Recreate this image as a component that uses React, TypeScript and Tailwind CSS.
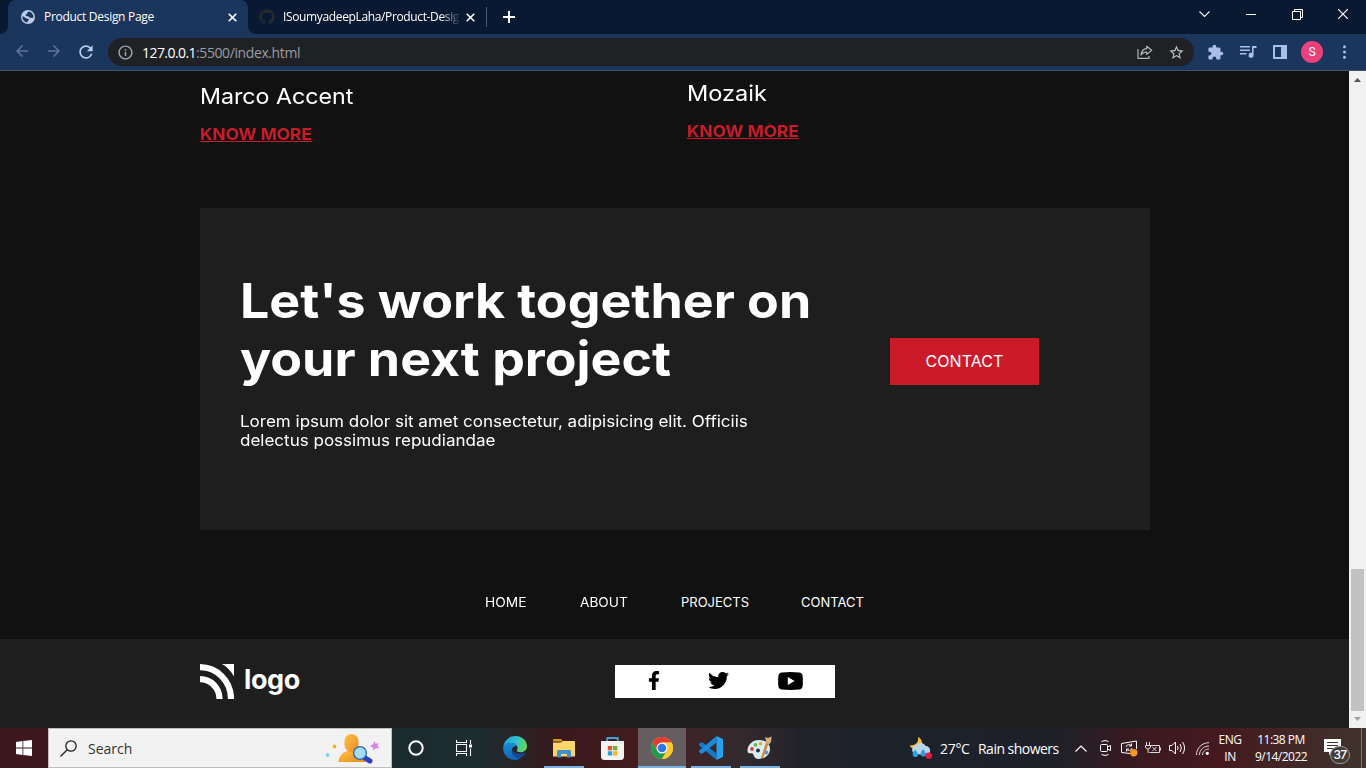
import type { ReactNode } from "react";
import { FaFacebookF, FaTwitter, FaGithub } from "react-icons/fa";
import {
  MdArrowBack,
  MdArrowForward,
  MdRefresh,
  MdInfoOutline,
  MdExtension,
  MdStarBorder,
} from "react-icons/md";

function TabClose() {
  return (
    <svg className="size-[9px] shrink-0" viewBox="0 0 9 9" stroke="#fff" strokeWidth="1.6">
      <path d="M.7.7l7.6 7.6M8.3.7L.7 8.3" />
    </svg>
  );
}

function TabStrip() {
  return (
    <div className="flex h-[34px] bg-[#091931]">
      <div className="flex w-2 items-end bg-[#1b365d]">
        <div className="h-full w-2 rounded-br-lg bg-[#091931]" />
      </div>
      <div className="flex w-[240px] items-center rounded-t-lg bg-[#1b365d] pl-[13px] pr-[11px]">
        <svg className="size-[14px] shrink-0" viewBox="0 0 14 14">
          <circle cx="7" cy="7" r="7" fill="#bccbe6" />
          <path
            d="M7.800 1.400C6.800 2 6 2.300 6.200 3.300 6.300 4.200 5 4 4.600 5c-.3 1 1 1.300 2.200 1.300 1.700 0 1.400 1.700 2.700 1.700.9 0 1.700-.2 2.900-.2A5.700 5.700 0 0 0 7.800 1.400zM1.500 6.200C1.200 9.500 3.200 12 6.500 12.500c-.2-1.500.8-1.600 1.300-2.500.4-1-.8-1.200-1.600-1.300C4.300 8.300 3.500 6.400 1.500 6.200z"
            fill="#1b365d"
          />
        </svg>
        <span className="ml-[9px] flex-1 whitespace-nowrap text-[12px] tracking-[-0.29px] text-white">
          Product Design Page
        </span>
        <TabClose />
      </div>
      <div className="w-2 bg-[#1b365d]">
        <div className="h-full w-2 rounded-bl-lg bg-[#091931]" />
      </div>
      <div className="flex w-[231px] items-center pl-[3px]">
        <FaGithub className="size-4 shrink-0 text-[#24292f]" />
        <span className="ml-2 w-[177px] whitespace-nowrap text-[12px] tracking-[-0.36px] text-white [mask-image:linear-gradient(90deg,#000_158px,transparent_178px)]">
          ISoumyadeepLaha/Product-Desig
        </span>
        <span className="ml-[6px] flex">
          <TabClose />
        </span>
        <span className="ml-[11px] h-5 w-px bg-[#4a5a74]" />
      </div>
      <svg className="ml-4 mt-[11px] size-3" viewBox="0 0 12 12" stroke="#fff" strokeWidth="2">
        <path d="M6 0v12M0 6h12" />
      </svg>
      <div className="ml-auto flex items-start gap-[35px] pr-[18px] pt-[9px]">
        <svg className="mr-[1px] size-[11px]" viewBox="0 0 11 11" fill="none" stroke="#f0f3f8" strokeWidth="1.100">
          <path d="M.5 2.500l5 5 5-5" />
        </svg>
        <svg className="size-[11px]" viewBox="0 0 11 11" stroke="#fff">
          <path d="M0 5.500h10" />
        </svg>
        <svg className="size-[11px]" viewBox="0 0 11 11" fill="none" stroke="#fff">
          <path d="M.5 2.500h8v8h-8zM2.500 2.500v-2h8v8h-2" />
        </svg>
        <svg className="size-[10px]" viewBox="0 0 10 10" stroke="#fff" strokeWidth="1.200">
          <path d="M0 0l10 10M10 0L0 10" />
        </svg>
      </div>
    </div>
  );
}

function Toolbar() {
  return (
    <div className="flex h-[37px] items-center border-b border-[#42546e] bg-[#1b365d]">
      <div className="flex w-[108px] gap-[14px] pl-[13px] text-[#5d7499]">
        <MdArrowBack className="size-[18px]" />
        <MdArrowForward className="size-[18px]" />
        <MdRefresh className="-ml-px size-[20px] text-[#b9cbed]" />
      </div>
      <div className="flex h-7 w-[1086px] items-center rounded-full bg-[#202124] pl-[9px] pr-[9px]">
        <MdInfoOutline className="size-[17px] text-[#a4a8ad]" />
        <span className="ml-2 text-[14px] tracking-[-0.56px] text-white">127.0.0.1</span>
        <span className="text-[14px] tracking-[-0.4px] text-[#999da2]">:5500/index.html</span>
        <svg className="ml-auto size-4" viewBox="0 0 16 16" fill="none" stroke="#b4b7bb" strokeWidth="1.200">
          <path d="M1 5v9.400h11V12" />
          <path d="M9.700 2.200l5 4.100-5 4.100V8C7 8 5.200 9 4 11c.3-3.500 2.300-6 5.700-6.300z" strokeLinejoin="round" />
        </svg>
        <MdStarBorder className="ml-[15px] size-[17px] text-[#bec1c5]" />
      </div>
      <MdExtension className="ml-[13px] size-[17px] text-[#a9bfe6]" />
      <svg className="ml-4 h-4 w-[17px]" viewBox="0 0 17 16" fill="#a9bfe6">
        <path d="M0 2h10v1.600H0zM0 5.500h10v1.600H0zM0 9h6.500v1.600H0zM12 2h4.500v2H13.600v7.200a2.500 2.500 0 1 1-1.600-2.300z" />
      </svg>
      <svg className="ml-4 size-[14px]" viewBox="0 0 14 14">
        <path d="M0 0h14v14H0zM2 2v10h6V2z" fill="#a9bfe6" fillRule="evenodd" />
      </svg>
      <span className="ml-[14px] flex size-[22px] items-center justify-center rounded-full bg-[#ec407a] font-[Roboto] text-[12px] text-white">
        S
      </span>
      <svg className="ml-5 h-[14px] w-[3px]" viewBox="0 0 3 14" fill="#a9bfe6">
        <circle cx="1.500" cy="1.800" r="1.500" />
        <circle cx="1.500" cy="7" r="1.500" />
        <circle cx="1.500" cy="12.200" r="1.500" />
      </svg>
    </div>
  );
}

function KnowMore() {
  return (
    <a className="mt-4 block w-fit origin-left scale-x-[1.082] text-[16px] font-bold leading-5 text-[#cb1b29] underline">
      KNOW MORE
    </a>
  );
}

function ProductLinks() {
  return (
    <div className="flex pl-[200px]">
      <div className="w-[487px] pt-[13px]">
        <h3 className="w-fit origin-left scale-x-[1.055] text-[22px] leading-6">Marco Accent</h3>
        <KnowMore />
      </div>
      <div className="pt-[10px]">
        <h3 className="w-fit origin-left scale-x-[1.07] text-[22px] leading-6">Mozaik</h3>
        <KnowMore />
      </div>
    </div>
  );
}

function CallToAction() {
  return (
    <section className="ml-[200px] flex h-[322px] w-[950px] bg-[#1e1e1e] pl-10 pt-16">
      <div className="w-[650px] whitespace-nowrap">
        <h1 className="w-fit origin-left scale-x-[1.081] text-[48px] font-bold leading-[58px]">
          Let's work together on
          <br />
          your next project
        </h1>
        <p className="mt-6 w-fit origin-left scale-x-[1.063] text-[16px] leading-[19px]">
          Lorem ipsum dolor sit amet consectetur, adipisicing elit. Officiis
          <br />
          delectus possimus repudiandae
        </p>
      </div>
      <button className="mt-[66px] h-[47px] w-[149px] bg-[#cb1b29] pb-[2px] text-[16px] tracking-[0.08px]">
        CONTACT
      </button>
    </section>
  );
}

function Footer() {
  return (
    <footer className="flex h-[89px] bg-[#1e1e1e] pl-[200px]">
      <div className="flex w-[415px] pt-[25px]">
        <svg className="h-[35px] w-[34px]" viewBox="0 0 34 35" fill="none">
          <path d="M0 3.200C17 3.200 31 17 31 35" stroke="#fff" strokeWidth="6.200" />
          <path d="M0 15.200C11 15.200 19.500 24 19.500 35" stroke="#fff" strokeWidth="6.200" />
          <path d="M22 0h12v12.500C31 7.200 27.500 3.300 22 0z" fill="#fff" />
        </svg>
        <span className="ml-[10px] text-[27px] font-bold leading-[31px] tracking-[-0.4px]">logo</span>
      </div>
      <div className="mt-[26px] flex h-[33px] w-[220px] items-center bg-white pb-[2px] pl-[29px] text-black">
        <FaFacebookF className="h-[19px] w-5" />
        <FaTwitter className="ml-[44px] size-[21px]" />
        <svg className="ml-[49px] h-[18px] w-[25px]" viewBox="0 0 25 18">
          <path
            fillRule="evenodd"
            d="M4 .5Q12.500-.4 21 .5 24.300.7 24.600 4q.6 5 0 10-.3 3.300-3.600 3.500-8.500.9-17 0Q.7 17.300.4 14q-.6-5 0-10Q.7.7 4 .5zM9.800 5v8l6.800-4z"
          />
        </svg>
      </div>
    </footer>
  );
}

function Page() {
  return (
    <main className="flex w-[1349px] flex-col bg-[#111] font-[Inter,sans-serif] text-white">
      <div className="h-[137px]">
        <ProductLinks />
      </div>
      <CallToAction />
      <nav className="flex h-[109px] pl-[485px] pt-[62px] text-[13px] leading-5">
        <div className="w-[95px]">
          <a className="inline-block origin-left scale-x-[1.06]">HOME</a>
        </div>
        <div className="w-[101px]">
          <a className="inline-block origin-left scale-x-[1.05]">ABOUT</a>
        </div>
        <a className="w-[120px]">PROJECTS</a>
        <a>CONTACT</a>
      </nav>
      <Footer />
    </main>
  );
}

function Scrollbar() {
  return (
    <div className="flex w-[17px] flex-col items-center bg-[#f1f1f1]">
      <svg className="mt-[7px] h-1 w-[7px]" viewBox="0 0 7 4" fill="#505050">
        <path d="M0 4l3.500-4L7 4z" />
      </svg>
      <div className="mt-[487px] h-[142px] w-[13px] bg-[#c1c1c1]" />
      <svg className="mt-[6px] h-1 w-[7px]" viewBox="0 0 7 4" fill="#a3a3a3">
        <path d="M0 0l3.500 4L7 0z" />
      </svg>
    </div>
  );
}

function SearchArt() {
  return (
    <svg className="ml-auto mt-px h-[34px] w-[56px]" viewBox="0 0 56 34">
      <defs>
        <linearGradient id="person" x1="0" y1="0" x2="1" y2="1">
          <stop offset="0" stopColor="#fbc04a" />
          <stop offset="1" stopColor="#ee8b1c" />
        </linearGradient>
      </defs>
      <circle cx="3.500" cy="23" r="1.900" fill="#7fd6de" />
      <circle cx="10.500" cy="14.500" r="1.900" fill="#f4b223" />
      <path d="M14.500 30c.5-7 5-10 9-11h8c5 1 9 5 9.500 11z" fill="url(#person)" />
      <rect x="20.500" y="2" width="14" height="18" rx="7" fill="url(#person)" />
      <path d="M41 26l5 3" stroke="#303fc0" strokeWidth="5" strokeLinecap="round" />
      <circle cx="36" cy="21" r="6.400" fill="#a5dcf5" stroke="#2863b8" strokeWidth="1.300" />
      <path d="M50.500 9l1.200 2.900 2.900-1.200-1 3 1.400 2.800-3.200-.3-2.200 2.300-.7-3-2.900-1.400 2.900-1.500z" fill="#dc80ea" />
    </svg>
  );
}

function TaskButton({ className = "", line = "", children }: { className?: string; line?: string; children: ReactNode }) {
  return (
    <div className={`flex h-10 w-12 shrink-0 flex-col items-center ${className}`}>
      <div className="flex h-[38px] items-center pt-[2px]">{children}</div>
      <div className={`h-[2px] ${line}`} />
    </div>
  );
}

function TaskButtons() {
  return (
    <>
      <TaskButton>
        <svg className="size-4" viewBox="0 0 16 16" fill="none" stroke="#fff" strokeWidth="2">
          <circle cx="8" cy="8" r="6.700" />
        </svg>
      </TaskButton>
      <TaskButton>
        <svg className="h-4 w-[17px]" viewBox="0 0 17 16" fill="none" stroke="#fff" strokeWidth="1.100">
          <path d="M.5 0v2.500h10V0M.5 16v-2.500h10V16M.5 4.500h10v7H.5zM14.500 0v4M14.500 8.500V16" />
          <path d="M13 4.500h3v3h-3z" fill="#fff" stroke="none" />
        </svg>
      </TaskButton>
      <TaskButton className="ml-[3px]">
        <svg className="size-6" viewBox="0 0 24 24">
          <defs>
            <linearGradient id="edgeTop" x1="0" y1=".3" x2="1" y2=".5">
              <stop offset="0" stopColor="#1fa3df" />
              <stop offset=".5" stopColor="#2dbfd0" />
              <stop offset="1" stopColor="#66d857" />
            </linearGradient>
            <linearGradient id="edgeLow" x1="0" y1="0" x2="0" y2="1">
              <stop offset="0" stopColor="#198bdc" />
              <stop offset="1" stopColor="#1164b4" />
            </linearGradient>
          </defs>
          <path d="M.2 11C1 4.500 6 0 12.300 0 19 0 24 4.800 24 10.300c0 3.500-2.800 6-6.300 6-2.700 0-4-.9-4-1.700 0-.6.9-1 .9-2.700 0-2.300-2.300-5-6-5C4.500 6.900 1 9 .2 11z" fill="url(#edgeTop)" />
          <path d="M.2 11C1.500 8.300 4.800 6.900 8.600 6.900c3 0 4.700 1.300 5.500 2.800-3.300.2-5.300 2.300-5.300 5 0 4.200 4 7.600 8.500 7.200C15.500 23.300 13.800 24 12 24 5.400 24-.5 18.600.2 11z" fill="url(#edgeLow)" />
          <path d="M8.800 14.300c-.3 4.500 3.500 8 8.500 7.600 2.300-1 4.200-2.800 5.200-4.700.3-.6-.2-.7-.6-.5-4.600 2.300-10.600.7-13.100-2.400z" fill="#124b93" />
        </svg>
      </TaskButton>
      <TaskButton className="ml-px" line="w-10 bg-[#76b3e4]">
        <svg className="h-[19px] w-[22px]" viewBox="0 0 22 19">
          <path d="M0 1q0-1 1-1h7l2 2.500H0z" fill="#d99b1c" />
          <path d="M0 3.500h8L10 2h11q1 0 1 1v14.500H0z" fill="#fbd66b" />
          <path d="M4 18.500v-6q0-1.500 1.500-1.500h11q1.500 0 1.500 1.500v6h-4V15H8v3.500z" fill="#3f8fca" />
        </svg>
      </TaskButton>
      <TaskButton>
        <svg className="h-[23px] w-[23px]" viewBox="0 0 23 23">
          <path d="M6.300 5V1h10.400v4" fill="none" stroke="#3aa7d6" strokeWidth="1.800" />
          <path d="M0 4h23v15.500q0 3.500-3.500 3.500h-16Q0 23 0 19.500z" fill="#f4f4f4" />
          <path d="M6.800 9h4.300v4.300H6.800z" fill="#e7512a" />
          <path d="M12 9h4.300v4.300H12z" fill="#6fb52c" />
          <path d="M6.800 14.200h4.300v4.300H6.800z" fill="#2a9fe0" />
          <path d="M12 14.200h4.300v4.300H12z" fill="#f8b91c" />
        </svg>
      </TaskButton>
      <TaskButton className="ml-[2px] bg-[#655d5f]" line="w-12 bg-[#76b3e4]">
        <svg className="size-[22px]" viewBox="0 0 22 22">
          <circle cx="11" cy="11" r="11" fill="#fcc934" />
          <path d="M1.470 5.500A11 11 0 0 1 20.530 5.500H11L6.240 13.750z" fill="#e33b2e" />
          <path d="M1.470 5.500A11 11 0 0 0 11 22l4.760-8.250H6.240z" fill="#229a4b" />
          <path d="M11 5.500h9.530A11 11 0 0 1 11 22l4.760-8.250z" fill="#fcc934" />
          <circle cx="11" cy="11" r="5.500" fill="#fff" />
          <circle cx="11" cy="11" r="4.300" fill="#2f75e8" />
        </svg>
      </TaskButton>
      <TaskButton className="ml-px" line="w-10 bg-[#76b3e4]">
        <svg className="h-[24px] w-[24px]" viewBox="0 0 24 24">
          <path d="M17.500 0L24 3v18l-6.500 3z" fill="#27a0ee" />
          <path d="M1.700 6.500L0 8v1.300L17.500 24V17.500L3.500 6.500z" fill="#147bc9" />
          <path d="M1.700 17.500L0 16v-1.300L17.500 0v6.500L3.500 17.500z" fill="#1a8bdb" />
        </svg>
      </TaskButton>
      <TaskButton className="ml-px" line="w-10 bg-[#76b3e4]">
        <svg className="-ml-px h-6 w-[25px]" viewBox="0 0 25 24">
          <path d="M12 4C5.500 4 .5 9 .5 14.500c0 3 2 2.700 4.200 2.800 3 .2 1 5.700 7 5.700C18 23 23 18.500 23 13S18 4 12 4z" fill="#d9edf5" />
          <circle cx="11" cy="14.500" r="2" fill="#26313b" />
          <circle cx="5" cy="13" r="1.900" fill="#dc4038" />
          <circle cx="8.500" cy="8.800" r="1.900" fill="#65b949" />
          <circle cx="13.500" cy="7.600" r="1.900" fill="#e7af35" />
          <circle cx="19.300" cy="16.500" r="1.900" fill="#4b9bd3" />
          <path d="M13.800 22.500L19 6.500l2.500 1-5.500 14.500z" fill="#d97f31" />
          <path d="M19.500 7L18 1l3 1 3.500-1.500-.3 5L22 8.500z" fill="#d9ad80" />
        </svg>
      </TaskButton>
    </>
  );
}

function Tray() {
  return (
    <div className="ml-[125px] flex flex-1 items-center whitespace-nowrap text-white">
      <svg className="h-6 w-[24px]" viewBox="0 0 24 24">
        <path d="M9 1c1 5-2 9-8.500 8.500C3 14 9 14 12 10c2-3 1-7-3-9z" fill="#f9bd2d" />
        <path d="M6 18a4.500 4.500 0 0 1 .5-8.500C9 6 15 6 16.500 10c5-.5 6.500 7 2 9z" fill="#b9d6ee" />
        <path d="M6 13.500c-2 3-3 4.500-2 6.300 1 1.700 4 1.700 5-.3.700-2-1.500-4-3-6zM14 13c-2 3-3 4.500-2 6.300 1 1.700 4 1.700 5-.3.700-2-1.500-4-3-6z" fill="#2b9fe7" />
        <circle cx="19.800" cy="19.800" r="3.300" fill="#de1b38" />
      </svg>
      <span className="ml-[7px] w-[38px] text-[14px] tracking-[-0.3px]">27°C</span>
      <span className="w-[97px] text-[14px] tracking-[-0.52px]">Rain showers</span>
      <svg className="h-[7px] w-3" viewBox="0 0 12 7" fill="none" stroke="#fff" strokeWidth="1.200">
        <path d="M.5 6.500L6 1l5.500 5.500" />
      </svg>
      <svg className="ml-3 h-4 w-[13px]" viewBox="0 0 13 16" fill="none" stroke="#fff">
        <path d="M2.500 1.500q3.500-2 7 0M2.500 14.500q3.500 2 7 0M2.500 4.500h5q1 0 1 1v5q0 1-1 1h-5q-1 0-1-1v-5q0-1 1-1zM8.500 7l3-1.500v5l-3-1.500" />
      </svg>
      <svg className="ml-[9px] h-[17px] w-[17px]" viewBox="0 0 17 17" fill="none" stroke="#fff">
        <path d="M9 13.500L.5 12.500v-9L15.500 1v8" />
        <path d="M5 7c.7-3 4.500-3 5.500-1M10.500 3.500V6H8M11 8c-.7 3-4.500 3-5.500 1M5.500 11.500V9H8" />
        <circle cx="12.800" cy="12.800" r="3.700" fill="#f7981d" stroke="none" />
      </svg>
      <svg className="ml-[7px] h-[13px] w-4" viewBox="0 0 16 13" fill="none" stroke="#ddd">
        <path d="M1.500 0v3M4.500 0v3M.5 3.500h5V5Q5 7 3 7T.5 5zM3 7v4M6 3.500h8.500v7h-10M15.500 5.500v3M7.500 5l4 4M11.500 5l-4 4" />
      </svg>
      <svg className="ml-2 h-[14px] w-[17px]" viewBox="0 0 17 14" fill="none" stroke="#fff">
        <path d="M.5 4.500h2.500L6.500 1v12L3 9.500H.5zM8.500 5q1.300 2 0 4M11 3q2.800 4 0 8M13.500 1q4.200 6 0 12" />
      </svg>
      <svg className="ml-[10px] h-[13px] w-[13px]" viewBox="0 0 13 13" fill="none" stroke="#ddd">
        <path d="M.5 13C.5 6 6 .7 13 .7M3.500 13c0-5 4-9 9.500-9M6.500 13c0-3.500 3-6 6.500-6" />
        <circle cx="11.300" cy="11.300" r="1.600" fill="#fff" stroke="none" />
      </svg>
      <div className="ml-2 flex w-[26px] flex-col items-center text-[12px] leading-[17px] tracking-[-0.48px]">
        <span>ENG</span>
        <span>IN</span>
      </div>
      <div className="ml-[11px] flex w-[54px] flex-col items-center text-[12px] leading-[17px] tracking-[-0.52px]">
        <span>11:38 PM</span>
        <span>9/14/2022</span>
      </div>
      <div className="relative ml-4 h-7 w-7">
        <svg className="mt-[5px] h-[17px] w-[17px]" viewBox="0 0 17 17">
          <path d="M0 0h17v13H8l-3 3v-3H0z" fill="#fff" />
          <path d="M3 3.500h11M3 6.500h11M3 9.500h6" stroke="#44302b" />
        </svg>
        <span className="absolute left-[6px] top-[12px] flex h-[18px] w-5 items-center justify-center rounded-full border border-[#999] bg-[#443b38] font-[Inter] text-[12px] font-medium tracking-[-0.8px]">
          37
        </span>
      </div>
      <div className="ml-auto mr-1 h-10 w-px bg-[#80736c]" />
    </div>
  );
}

function Taskbar() {
  return (
    <div className="flex h-10 bg-[linear-gradient(90deg,#3d181d_0px,#3d181d_48px,#1b2c30_392px,#1c2c2f_480px,#39191c_560px,#431c1e_640px,#352a2e_735px,#22232a_800px,#1c222b_900px,#1f2028_1060px,#391a21_1130px,#45191e_1220px,#40302c_1340px,#41332e_1366px)]">
      <div className="flex w-12 items-center justify-center">
        <svg className="size-4" viewBox="0 0 16 16" fill="#fff">
          <path d="M0 2l6.500-.9v6.500H0zM7.300 1L16 0v7.600H7.300zM0 8.400h6.500v6.500L0 14zM7.300 8.400H16V16l-8.700-1.100z" />
        </svg>
      </div>
      <div className="flex w-[344px] items-center border border-[#bdbdbd] bg-[#f2f2f2] pl-[11px] pr-[11px]">
        <svg className="size-[17px]" viewBox="0 0 17 17" fill="none" stroke="#222" strokeWidth="1.300">
          <circle cx="11" cy="6" r="5.200" />
          <path d="M7.200 9.800L.5 16.500" />
        </svg>
        <span className="ml-[11px] text-[14px] text-[#333]">Search</span>
        <SearchArt />
      </div>
      <TaskButtons />
      <Tray />
    </div>
  );
}

export default function App() {
  return (
    <div className="flex h-[768px] w-[1366px] flex-col overflow-hidden font-['Open_Sans',sans-serif]">
      <TabStrip />
      <Toolbar />
      <div className="flex h-[657px]">
        <Page />
        <Scrollbar />
      </div>
      <Taskbar />
    </div>
  );
}
